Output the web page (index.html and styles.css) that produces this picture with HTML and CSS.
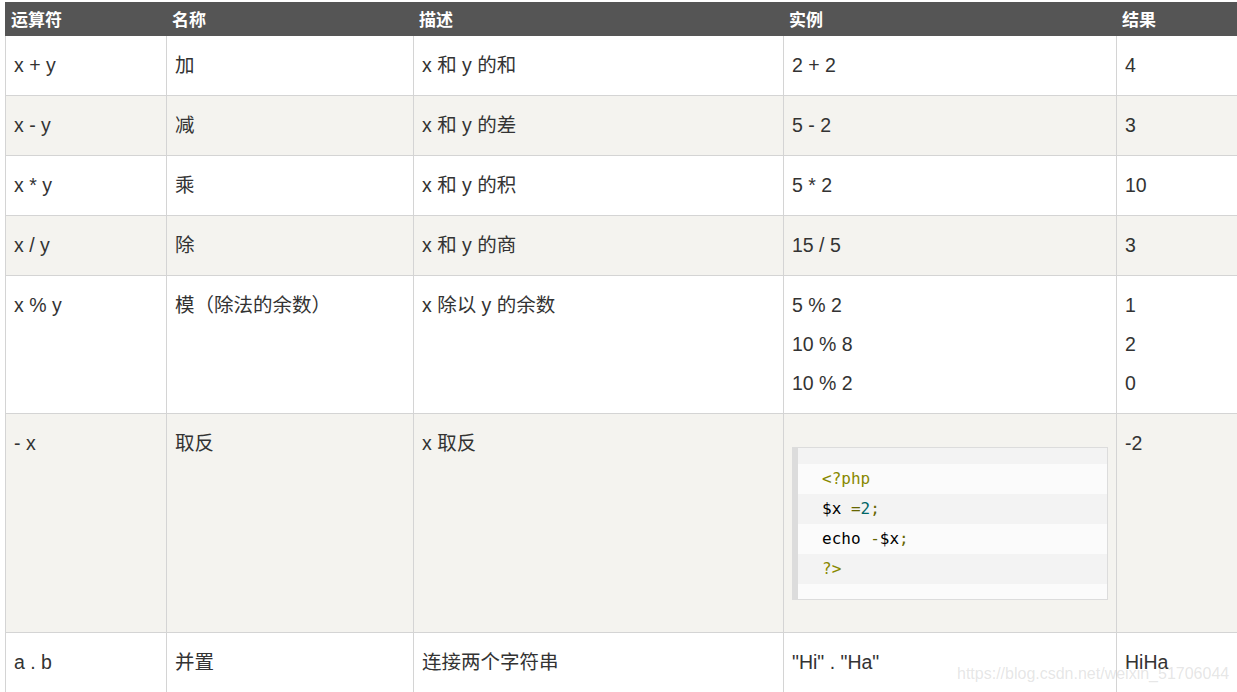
FILE: index.html
```html
<!DOCTYPE html>
<html>
<head>
<meta charset="utf-8">
<link rel="stylesheet" href="styles.css">
</head>
<body>
<table class="ref">
  <thead>
    <tr>
      <th class="c1">运算符</th>
      <th class="c2">名称</th>
      <th class="c3">描述</th>
      <th class="c4">实例</th>
      <th class="c5">结果</th>
    </tr>
  </thead>
  <tbody>
    <tr><td>x + y</td><td>加</td><td>x 和 y 的和</td><td>2 + 2</td><td>4</td></tr>
    <tr><td>x - y</td><td>减</td><td>x 和 y 的差</td><td>5 - 2</td><td>3</td></tr>
    <tr><td>x * y</td><td>乘</td><td>x 和 y 的积</td><td>5 * 2</td><td>10</td></tr>
    <tr><td>x / y</td><td>除</td><td>x 和 y 的商</td><td>15 / 5</td><td>3</td></tr>
    <tr><td>x % y</td><td>模（除法的余数）</td><td>x 除以 y 的余数</td><td>5 % 2<br>10 % 8<br>10 % 2</td><td>1<br>2<br>0</td></tr>
    <tr>
      <td>- x</td><td>取反</td><td>x 取反</td>
      <td>
        <div class="code">
          <div class="pad-top"></div>
          <div class="ln odd"><span class="tag">&lt;?php</span></div>
          <div class="ln even"><span class="pln">$x</span> <span class="pun">=</span><span class="lit">2</span><span class="pun">;</span></div>
          <div class="ln odd"><span class="pln">echo</span> <span class="pun">-</span><span class="pln">$x</span><span class="pun">;</span></div>
          <div class="ln even"><span class="tag">?&gt;</span></div>
          <div class="pad-bottom"></div>
        </div>
      </td>
      <td>-2</td>
    </tr>
    <tr><td>a . b</td><td>并置</td><td>连接两个字符串</td><td>"Hi" . "Ha"</td><td>HiHa</td></tr>
  </tbody>
</table>
<div class="watermark">https://blog.csdn.net/weixin_51706044</div>
</body>
</html>
```

FILE: styles.css
```css
html {
  overflow: hidden;
}
body {
  margin: 0;
  background: #fff;
  font-family: "Liberation Sans", Arial, "Noto Sans CJK SC", sans-serif;
  color: #333;
}
.ref {
  border-collapse: collapse;
  table-layout: fixed;
  width: 1311px;
  margin: 2px 0 0 5px;
}
.ref th {
  background: #555;
  color: #fff;
  font-size: 17px;
  font-weight: bold;
  line-height: 24px;
  padding: 6px 5px 2px;
  text-align: left;
  vertical-align: top;
  border: 1px solid #555;
}
.ref .c1 { width: 161px; }
.ref .c2 { width: 247px; }
.ref .c3 { width: 370px; }
.ref .c4 { width: 333px; }
.ref .c5 { width: 200px; }
.ref th, .ref td {
  box-sizing: border-box;
}
.ref td {
  font-size: 19.5px;
  line-height: 39px;
  padding: 10px 8px;
  vertical-align: top;
  border: 1px solid #d4d4d4;
}
.ref tbody tr:nth-child(even) {
  background: #f4f3ef;
}
.code {
  margin: 23px 0 22px 0;
  border: 1px solid #dcdcdc;
  border-left: 6px solid #dcdcdc;
  font-family: "DejaVu Sans Mono", monospace;
  font-size: 16px;
  line-height: 30px;
  color: #000;
}
.pad-top {
  height: 16px;
  background: #f3f3f3;
}
.pad-bottom {
  height: 15px;
  background: #fbfbfb;
}
.ln {
  height: 30px;
  padding-left: 24px;
  white-space: pre;
}
.ln.odd { background: #fbfbfb; }
.ln.even { background: #f3f3f3; }
.tag { color: #880; }
.pun { color: #660; }
.lit { color: #066; }
.pln { color: #000; }
.watermark {
  position: absolute;
  left: 957px;
  top: 664px;
  font-family: "Liberation Sans", Arial, sans-serif;
  font-size: 16px;
  line-height: 20px;
  color: rgba(170, 170, 170, 0.3);
  white-space: nowrap;
}
```
